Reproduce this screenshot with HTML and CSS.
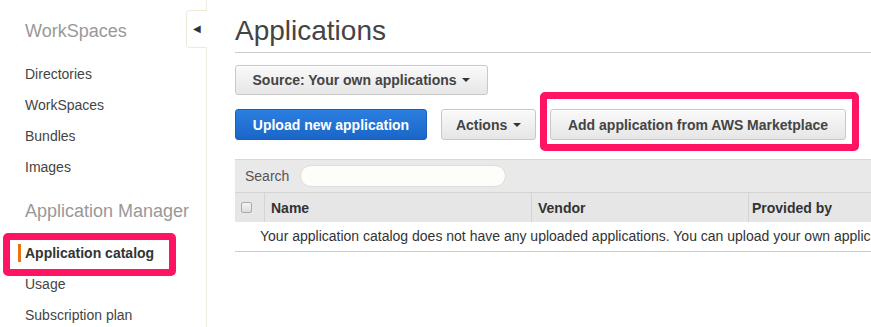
FILE: index.html
```html
<!DOCTYPE html>
<html lang="en">

<head>
    <meta charset="UTF-8">
    <title>Applications</title>
    <link rel="stylesheet" href="styles.css">
</head>

<body>
    <aside class="sidebar">
        <div class="side-toggle">&#9664;</div>
        <h3 class="side-title">WorkSpaces</h3>
        <ul class="side-nav">
            <li>Directories</li>
            <li>WorkSpaces</li>
            <li>Bundles</li>
            <li>Images</li>
        </ul>
        <h3 class="side-title side-title-2">Application Manager</h3>
        <ul class="side-nav">
            <li class="active">Application catalog<span class="mark mark-nav"></span></li>
            <li>Usage</li>
            <li>Subscription plan</li>
        </ul>
    </aside>

    <main class="main">
        <h1 class="page-title">Applications</h1>

        <div class="toolbar">
            <button class="btn">Source: Your own applications <span class="caret"></span></button>
        </div>

        <div class="toolbar actions">
            <button class="btn btn-primary btn-upload">Upload new application</button>
            <button class="btn btn-actions">Actions <span class="caret"></span></button>
            <div class="market">
                <button class="btn btn-market">Add application from AWS Marketplace</button>
                <span class="mark mark-market"></span>
            </div>
        </div>

        <div class="grid">
            <div class="grid-search">
                <span>Search</span>
                <input type="text" class="search-input">
            </div>
            <div class="grid-head">
                <div class="col col-check"><span class="checkbox"></span></div>
                <div class="col col-name">Name</div>
                <div class="col col-vendor">Vendor</div>
                <div class="col col-provider">Provided by</div>
            </div>
            <div class="grid-empty">
                Your application catalog does not have any uploaded applications. You can upload your own applications or add them from AWS Marketplace.
            </div>
        </div>
    </main>
</body>

</html>
```

FILE: styles.css
```css
* {
    margin: 0;
    padding: 0;
    box-sizing: border-box;
}

html,
body {
    height: 100%;
}

body {
    font-family: 'Liberation Sans', Arial, sans-serif;
    font-size: 14px;
    color: #444;
    background: #fff;
    display: flex;
    overflow: hidden;
}

/* sidebar */
.sidebar {
    position: relative;
    flex: 0 0 207px;
    border-right: 1px solid #f1ece0;
    padding: 20px 0 0 25px;
}

.side-toggle {
    position: absolute;
    top: 10px;
    right: -1px;
    width: 21px;
    height: 38px;
    border: 1px solid #efe9da;
    border-right: none;
    border-radius: 4px 0 0 4px;
    background: #fff;
    font-size: 10px;
    line-height: 36px;
    text-align: center;
    color: #333;
}

.side-title {
    font-size: 18px;
    font-weight: normal;
    color: #999;
    line-height: 22px;
    margin-bottom: 17px;
}

.side-title-2 {
    margin-top: 17px;
    margin-bottom: 16px;
}

.side-nav {
    list-style: none;
}

.side-nav li {
    position: relative;
    line-height: 31px;
    white-space: nowrap;
}

.side-nav li.active {
    font-weight: bold;
    color: #333;
}

.side-nav li.active::before {
    content: "";
    position: absolute;
    left: -7px;
    top: 6px;
    width: 3px;
    height: 18px;
    background: #ec7211;
}

/* annotation frames */
.mark {
    position: absolute;
    border: 7px solid #ff1464;
    border-radius: 5px;
    pointer-events: none;
}

.mark-nav {
    left: -22px;
    top: -5px;
    width: 173px;
    height: 43px;
}

/* main */
.main {
    flex: 0 0 auto;
    width: 900px;
    padding-left: 28px;
}

.page-title {
    font-size: 28px;
    font-weight: normal;
    color: #444;
    line-height: 32px;
    padding: 15px 0 5px;
    border-bottom: 1px solid #ccc;
}

.toolbar {
    display: flex;
    margin-top: 12px;
}

.toolbar.actions {
    margin-top: 14px;
    gap: 14px;
}

.btn {
    font-family: inherit;
    font-size: 14px;
    font-weight: bold;
    color: #444;
    height: 30px;
    padding: 0 10px;
    white-space: nowrap;
    border: 1px solid #c8c8c8;
    border-radius: 3px;
    background: linear-gradient(#fafafa, #e6e6e6);
    box-shadow: inset 0 1px 0 #fff;
}

.toolbar:first-of-type .btn {
    width: 253px;
}

.actions .btn {
    height: 31px;
}

.btn-primary {
    color: #fff;
    border-color: #1b5fb8;
    background: linear-gradient(#2b7fe0, #1a66c8);
    box-shadow: none;
}

.btn-upload {
    width: 192px;
}

.btn-actions {
    width: 95px;
}

.caret {
    display: inline-block;
    width: 0;
    height: 0;
    border-left: 4px solid transparent;
    border-right: 4px solid transparent;
    border-top: 4px solid #333;
    vertical-align: 3px;
    margin-left: 2px;
}

.market {
    position: relative;
}

.btn-market {
    width: 296px;
}

.mark-market {
    left: -10px;
    top: -17px;
    width: 319px;
    height: 59px;
}

/* grid */
.grid {
    margin-top: 19px;
}

.grid-search {
    display: flex;
    align-items: center;
    height: 33px;
    padding-left: 10px;
    background: #e9e9e9;
    border-top: 1px solid #d8d8d8;
    color: #555;
}

.search-input {
    width: 206px;
    height: 22px;
    margin-left: 11px;
    border: 1px solid #ddd;
    border-radius: 11px;
    background: #fdfdf9;
}

.grid-head {
    display: flex;
    height: 30px;
    background: #e6e6e6;
    border-top: 1px solid #d4d4d4;
    font-weight: bold;
    color: #333;
}

.col {
    display: flex;
    align-items: center;
    border-left: 1px solid #d4d4d4;
    padding-left: 6px;
}

.col-check {
    width: 29px;
    border-left: none;
    padding-left: 6px;
}

.col-name {
    width: 267px;
}

.col-vendor {
    width: 217px;
}

.col-provider {
    flex: 1;
    padding-left: 3px;
}

.checkbox {
    width: 11px;
    height: 11px;
    border: 1px solid #aaa;
    border-radius: 2px;
    background: linear-gradient(#f4f4f4, #ddd);
}

.grid-empty {
    height: 30px;
    line-height: 29px;
    padding-left: 25px;
    color: #333;
    white-space: nowrap;
    border-bottom: 1px solid #ccc;
}
```
